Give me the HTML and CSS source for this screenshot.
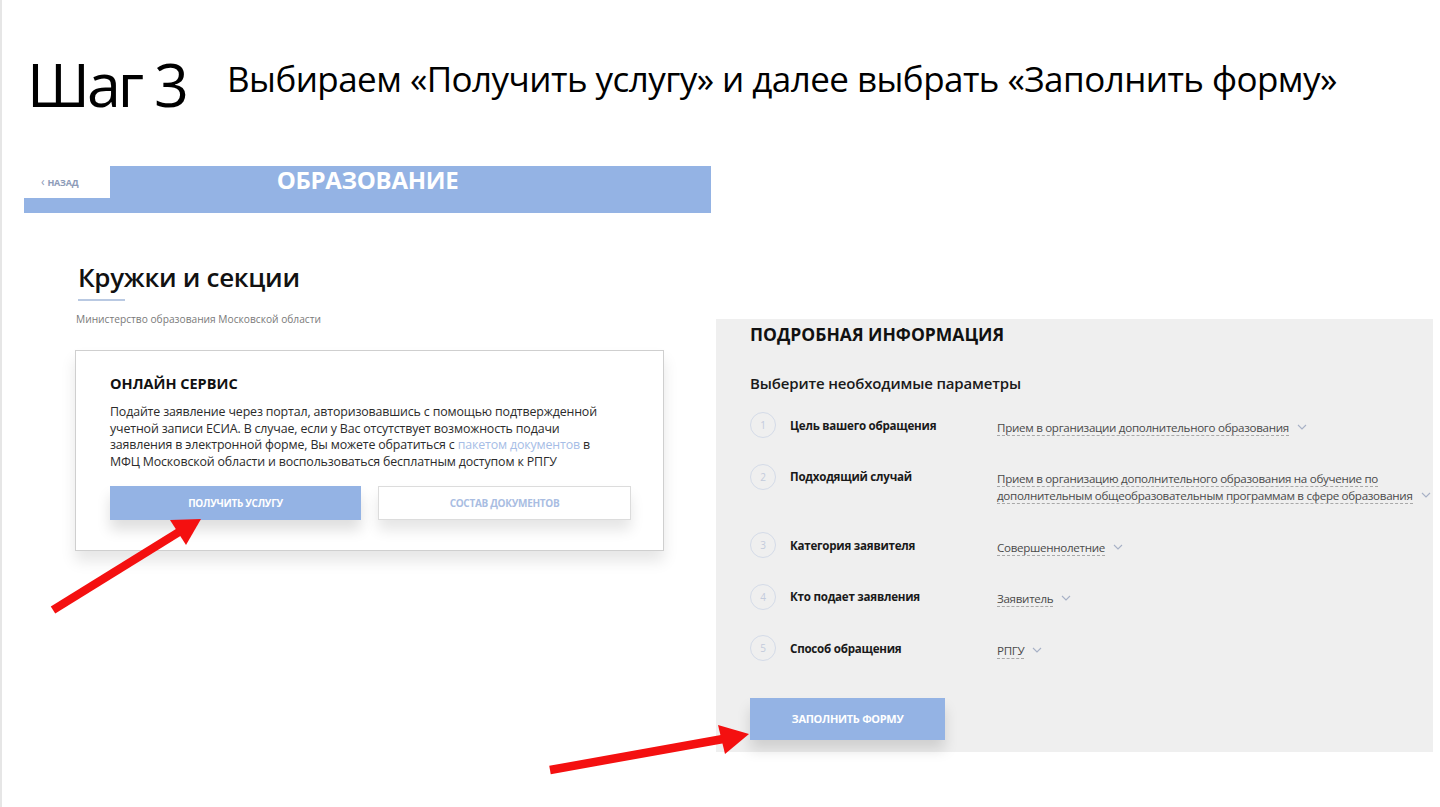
FILE: index.html
```html
<!DOCTYPE html>
<html lang="ru">
<head>
<meta charset="utf-8">
<title>Шаг 3</title>
<link rel="stylesheet" href="styles.css">
</head>
<body>
<div class="slide">
  <header class="slide-head">
    <h1 class="step">Шаг 3</h1>
    <p class="step-text">Выбираем «Получить услугу» и далее выбрать «Заполнить форму»</p>
  </header>

  <div class="content">
    <section class="left">
      <div class="topbar">
        <div class="back"><span class="back-arrow">‹</span> НАЗАД</div>
        <div class="topbar-title">ОБРАЗОВАНИЕ</div>
      </div>
      <h2 class="service-title">Кружки и секции</h2>
      <div class="service-rule"></div>
      <p class="service-org">Министерство образования Московской области</p>

      <div class="card">
        <h3 class="card-title">ОНЛАЙН СЕРВИС</h3>
        <p class="card-text">Подайте заявление через портал, авторизовавшись с помощью подтвержденной<br>учетной записи ЕСИА. В случае, если у Вас отсутствует возможность подачи<br>заявления в электронной форме, Вы можете обратиться с <span class="link">пакетом документов</span> в<br>МФЦ Московской области и воспользоваться бесплатным доступом к РПГУ</p>
        <div class="card-buttons">
          <div class="btn btn-primary">ПОЛУЧИТЬ УСЛУГУ</div>
          <div class="btn btn-outline">СОСТАВ ДОКУМЕНТОВ</div>
        </div>
      </div>
    </section>

    <section class="right">
      <h2 class="info-title">ПОДРОБНАЯ ИНФОРМАЦИЯ</h2>
      <h3 class="info-sub">Выберите необходимые параметры</h3>
      <div class="params">
        <div class="param">
          <div class="num">1</div>
          <div class="param-label">Цель вашего обращения</div>
          <div class="param-value"><span class="dash">Прием в организации дополнительного образования</span><svg class="chev" viewBox="0 0 10 6"><polyline points="1,1 5,5 9,1"/></svg></div>
        </div>
        <div class="param">
          <div class="num">2</div>
          <div class="param-label">Подходящий случай</div>
          <div class="param-value"><span class="dash">Прием в организацию дополнительного образования на обучение по<br>дополнительным общеобразовательным программам в сфере образования</span><svg class="chev" viewBox="0 0 10 6"><polyline points="1,1 5,5 9,1"/></svg></div>
        </div>
        <div class="param">
          <div class="num">3</div>
          <div class="param-label">Категория заявителя</div>
          <div class="param-value"><span class="dash">Совершеннолетние</span><svg class="chev" viewBox="0 0 10 6"><polyline points="1,1 5,5 9,1"/></svg></div>
        </div>
        <div class="param">
          <div class="num">4</div>
          <div class="param-label">Кто подает заявления</div>
          <div class="param-value"><span class="dash">Заявитель</span><svg class="chev" viewBox="0 0 10 6"><polyline points="1,1 5,5 9,1"/></svg></div>
        </div>
        <div class="param">
          <div class="num">5</div>
          <div class="param-label">Способ обращения</div>
          <div class="param-value"><span class="dash">РПГУ</span><svg class="chev" viewBox="0 0 10 6"><polyline points="1,1 5,5 9,1"/></svg></div>
        </div>
      </div>
      <div class="btn btn-fill">ЗАПОЛНИТЬ ФОРМУ</div>
    </section>
  </div>

  <svg class="arrows" viewBox="0 0 1440 807" width="1440" height="807">
    <line x1="51" y1="610" x2="177" y2="532" class="shaft"/>
    <polygon points="199,519 184,545 168,520" class="head"/>
    <line x1="548" y1="770" x2="721" y2="739" class="shaft"/>
    <polygon points="747,734 723,754 716,725" class="head"/>
  </svg>
</div>
</body>
</html>
```

FILE: styles.css
```css
* { box-sizing: border-box; }

html, body {
  margin: 0;
  padding: 0;
  background: #ffffff;
}

.slide {
  position: relative;
  width: 1440px;
  height: 807px;
  overflow: hidden;
  background: #ffffff;
  border-left: 2px solid #e6e6e6;
  font-family: "Open Sans", "Noto Sans", sans-serif;
  color: #111;
}

/* ---------- slide heading ---------- */
.slide-head {
  display: flex;
  align-items: flex-start;
  height: 166px;
  padding-top: 53px;
  padding-left: 25px;
}

.step {
  margin: 0;
  width: 200px;
  font-size: 61px;
  font-weight: 500;
  line-height: 1;
  letter-spacing: -3px;
  color: #000;
}

.step-text {
  margin: 8px 0 0 0;
  font-size: 35px;
  line-height: 1;
  font-weight: 400;
  letter-spacing: -0.55px;
  color: #000;
  white-space: nowrap;
}

/* ---------- content ---------- */
.content {
  display: flex;
  align-items: flex-start;
}

.left {
  margin-left: 22px;
  width: 687px;
}

.right {
  margin-left: 5px;
  margin-top: 153px;
  width: 717px;
  height: 433px;
  background: #efefef;
  padding: 4px 0 0 34px;
}

/* ---------- left: portal header ---------- */
.topbar {
  display: flex;
  align-items: flex-start;
  height: 47px;
  background: #94b3e4;
}

.back {
  width: 86px;
  height: 32px;
  background: #ffffff;
  display: flex;
  align-items: center;
  padding-left: 17px;
  font-size: 9px;
  font-weight: 700;
  color: #8d9bb8;
  letter-spacing: -0.2px;
}

.back-arrow {
  font-weight: 400;
  font-size: 12px;
  margin-right: 3px;
  line-height: 1;
}

.topbar-title {
  flex: 1;
  margin-right: 86px;
  text-align: center;
  color: #ffffff;
  font-size: 24px;
  font-weight: 700;
  line-height: 27px;
  letter-spacing: -0.3px;
}

.service-title {
  margin: 51px 0 0 54px;
  font-size: 26px;
  font-weight: 600;
  line-height: 1;
  color: #111;
  letter-spacing: -0.3px;
}

.service-rule {
  width: 47px;
  height: 2px;
  margin: 9px 0 0 54px;
  background: #b9c9e2;
}

.service-org {
  margin: 11px 0 0 52px;
  font-size: 10.2px;
  line-height: 14px;
  color: #7a7a7a;
  letter-spacing: 0;
}

/* ---------- card ---------- */
.card {
  margin: 24px 0 0 51px;
  width: 589px;
  height: 201px;
  border: 1px solid #cfcfcf;
  background: #ffffff;
  padding: 24px 32px 0 34px;
  box-shadow: 0 10px 14px rgba(0, 0, 0, 0.10);
}

.card-title {
  margin: 0;
  font-size: 14.5px;
  font-weight: 700;
  line-height: 18px;
  color: #111;
}

.card-text {
  margin: 11px 0 0 0;
  font-size: 12.4px;
  line-height: 16.7px;
  color: #2b2b2b;
  letter-spacing: -0.15px;
  white-space: nowrap;
}

.link { color: #a6bde6; }

.card-buttons {
  display: flex;
  gap: 17px;
  margin-top: 15px;
}

.btn {
  display: flex;
  align-items: center;
  justify-content: center;
  font-weight: 700;
  letter-spacing: -0.3px;
}

.btn-primary {
  width: 251px;
  height: 34px;
  background: #94b3e4;
  color: #ffffff;
  font-size: 10px;
  box-shadow: 0 10px 14px rgba(0, 0, 0, 0.13);
}

.btn-outline {
  width: 253px;
  height: 34px;
  background: #ffffff;
  border: 1px solid #dcdcdc;
  color: #a9bde2;
  font-size: 10px;
  box-shadow: 0 10px 14px rgba(0, 0, 0, 0.10);
}

/* ---------- right: details ---------- */
.info-title {
  margin: 0;
  font-size: 17.5px;
  font-weight: 700;
  line-height: 22px;
  color: #111;
  letter-spacing: 0;
}

.info-sub {
  margin: 28px 0 0 0;
  font-size: 15px;
  font-weight: 600;
  line-height: 20px;
  color: #1a1a1a;
  letter-spacing: -0.15px;
}

.params {
  display: flex;
  flex-direction: column;
  gap: 25px;
  margin-top: 19px;
}

.param {
  display: flex;
  align-items: flex-start;
}

.num {
  flex: none;
  width: 26px;
  height: 26px;
  border-radius: 50%;
  border: 1px solid #d4dbe8;
  display: flex;
  align-items: center;
  justify-content: center;
  font-size: 10px;
  color: #c3cbdc;
}

.param-label {
  width: 207px;
  margin-left: 14px;
  margin-top: 4.5px;
  font-size: 11.6px;
  font-weight: 700;
  line-height: 17px;
  color: #1a1a1a;
  letter-spacing: -0.25px;
}

.param-value {
  margin-top: 6.5px;
  padding-bottom: 3px;
  font-size: 11.6px;
  line-height: 17px;
  color: #4a4a4a;
  letter-spacing: -0.3px;
  white-space: nowrap;
}

.dash {
  border-bottom: 1px dashed #a8a8a8;
}

.chev {
  width: 10px;
  height: 6px;
  margin-left: 8px;
  vertical-align: 2px;
}

.chev polyline {
  fill: none;
  stroke: #a7b1c6;
  stroke-width: 1.1;
}

.btn-fill {
  margin-top: 36px;
  width: 195px;
  height: 42px;
  background: #94b3e4;
  color: #ffffff;
  font-size: 11px;
  box-shadow: 0 10px 14px rgba(0, 0, 0, 0.13);
}

/* ---------- annotation arrows ---------- */
.arrows {
  position: absolute;
  left: 0;
  top: 0;
  pointer-events: none;
}

.shaft {
  stroke: #f41010;
  stroke-width: 8.5;
  stroke-linecap: butt;
}

.head {
  fill: #f41010;
}
```
